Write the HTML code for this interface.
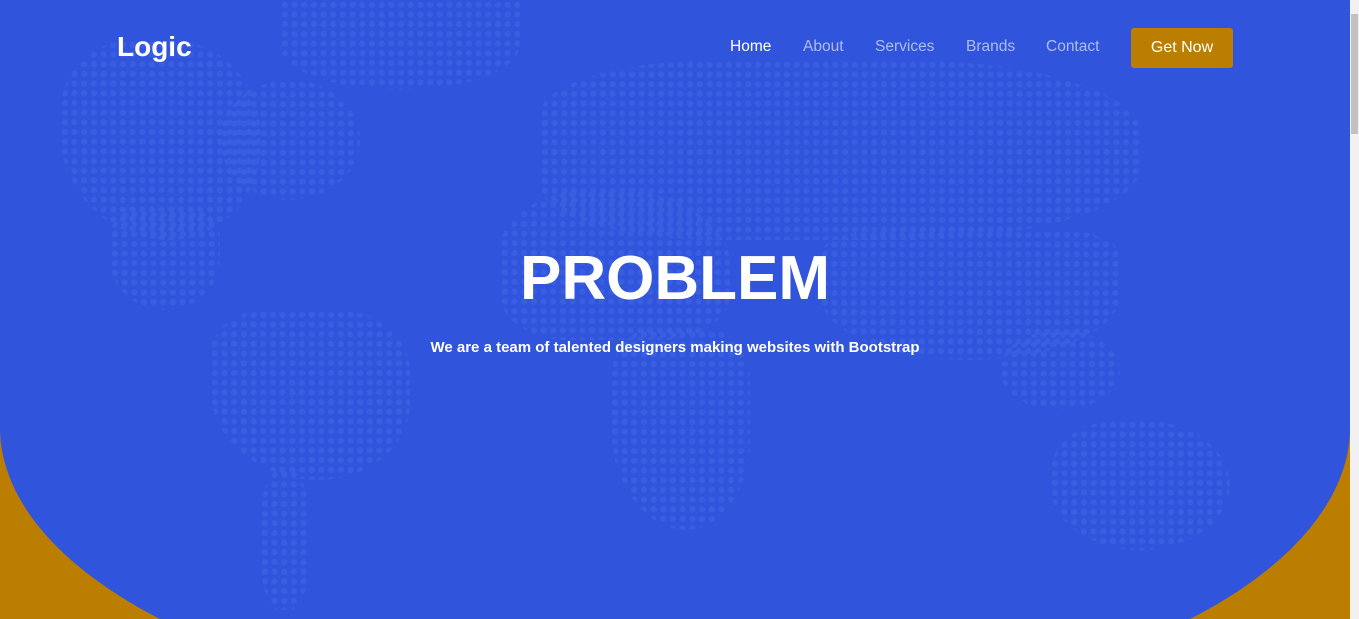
<!DOCTYPE html>
<html style="width:1359px;height:619px;overflow:hidden"><head><style>
html,body{margin:0;padding:0;}
body{width:1359px;height:619px;overflow:hidden;background:#bb7e00;font-family:"Liberation Sans",Arial,sans-serif;position:relative;}
.wrap{position:absolute;left:0;top:0;width:1350px;height:619px;overflow:hidden;}
svg.bg{position:absolute;left:0;top:0;}
.d{position:absolute;background-image:radial-gradient(circle,#3a5ee0 2.8px,transparent 3.3px);background-size:9.7px 9.7px;}
.sb{position:absolute;right:0;top:0;width:9px;height:619px;background:#f1f1f1;}
.sb i{position:absolute;left:1px;top:14px;width:7px;height:120px;background:#c1c1c1;}
.logo{position:absolute;left:117px;top:31px;color:#fff;font-weight:bold;font-size:28px;}
.nav{position:absolute;top:38px;font-size:15.5px;color:rgba(255,255,255,.6);}
.btn{position:absolute;left:1131px;top:28px;width:102px;height:40px;background:#bb7e00;border-radius:3px;color:#fff;font-size:16px;text-align:center;line-height:40px;}
h1{position:absolute;left:0;width:1350px;top:243px;margin:0;text-align:center;color:#fff;font-size:62px;font-weight:bold;}
p{position:absolute;left:0;width:1350px;top:339px;margin:0;text-align:center;color:#fff;font-size:15px;font-weight:bold;}
</style></head><body>
<div class="wrap">
<svg class="bg" width="1350" height="619" viewBox="0 0 1350 619"><path d="M0 0H1350V425A640 290 0 0 1 1190 619H160A640 290 0 0 1 0 430Z" fill="#3055dc"/></svg>
<div class="d" style="left:60px;top:40px;width:200px;height:200px;border-radius:40% 50% 50% 60%"></div>
<div class="d" style="left:110px;top:210px;width:110px;height:100px;border-radius:30% 30% 60% 60%"></div>
<div class="d" style="left:220px;top:80px;width:140px;height:120px;border-radius:50%"></div>
<div class="d" style="left:280px;top:0px;width:240px;height:90px;border-radius:0 0 50% 50%"></div>
<div class="d" style="left:210px;top:310px;width:200px;height:170px;border-radius:30% 40% 50% 60%"></div>
<div class="d" style="left:260px;top:470px;width:50px;height:140px;border-radius:40%"></div>
<div class="d" style="left:500px;top:190px;width:230px;height:150px;border-radius:40% 50% 30% 30%"></div>
<div class="d" style="left:610px;top:330px;width:140px;height:200px;border-radius:30% 30% 50% 60%"></div>
<div class="d" style="left:540px;top:60px;width:600px;height:180px;border-radius:30% 40% 40% 30%"></div>
<div class="d" style="left:820px;top:230px;width:300px;height:130px;border-radius:20% 20% 50% 50%"></div>
<div class="d" style="left:1050px;top:420px;width:180px;height:130px;border-radius:40% 50% 50% 50%"></div>
<div class="d" style="left:1000px;top:330px;width:120px;height:80px;border-radius:50%"></div>
</div>
<div class="sb"><i></i></div>
<div class="logo">Logic</div>
<div class="nav" style="left:730px;color:#fff">Home</div>
<div class="nav" style="left:803px">About</div>
<div class="nav" style="left:875px">Services</div>
<div class="nav" style="left:966px">Brands</div>
<div class="nav" style="left:1046px">Contact</div>
<div class="btn">Get Now</div>
<h1>PROBLEM</h1>
<p>We are a team of talented designers making websites with Bootstrap</p>
</body></html>
